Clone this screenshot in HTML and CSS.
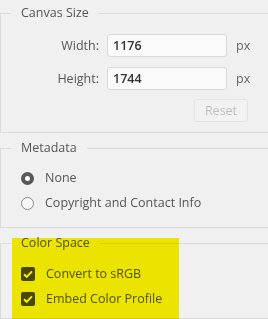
FILE: index.html
```html
<!DOCTYPE html>
<html lang="en">
<head>
  <meta charset="UTF-8">
  <meta name="viewport" content="width=device-width, initial-scale=1.0">
  <title>Export settings</title>
  <link rel="stylesheet" href="styles.css">
</head>
<body>

  <form class="panel">

    <fieldset class="group canvas-size">
      <legend>Canvas Size</legend>
      <div class="size-grid">
        <label for="w">Width:</label>
        <input id="w" type="text" value="1176">
        <span class="unit">px</span>
        <label for="h">Height:</label>
        <input id="h" type="text" value="1744">
        <span class="unit">px</span>
      </div>
      <div class="reset-row">
        <button type="button" class="reset" disabled>Reset</button>
      </div>
    </fieldset>

    <fieldset class="group metadata">
      <legend>Metadata</legend>
      <div class="options">
        <label class="option"><span class="radio checked"></span>None</label>
        <label class="option"><span class="radio"></span>Copyright and Contact Info</label>
      </div>
    </fieldset>

    <fieldset class="group color-space">
      <legend>Color Space</legend>
      <div class="options">
        <label class="option">
          <span class="check"><svg width="14" height="14" viewBox="0 0 14 14"><path d="M3 7.2l2.7 2.7L11 4.4" fill="none" stroke="#fff" stroke-width="2"/></svg></span>
          Convert to sRGB
        </label>
        <label class="option">
          <span class="check"><svg width="14" height="14" viewBox="0 0 14 14"><path d="M3 7.2l2.7 2.7L11 4.4" fill="none" stroke="#fff" stroke-width="2"/></svg></span>
          Embed Color Profile
        </label>
      </div>
      <!-- highlight marker laid over the section -->
      <div class="highlight"></div>
    </fieldset>

  </form>

</body>
</html>
```

FILE: styles.css
```css
body{
  margin: 0; padding: 0;
  background-color: #f0f0f0;
  color: #555;
  font-family: 'Open Sans', sans-serif;
  font-size: 12.5px;
  line-height: 18px;
  height: 319px;
  overflow: hidden;
}

fieldset.group{
  position: relative;
  margin: 4px 0 0 0;
  padding: 11px 0 10px 10px;
  border: 1px solid #dadada;
  border-right: none;
}

fieldset.canvas-size{
  padding-top: 12px;
}

fieldset.group legend{
  padding: 0 10px;
  line-height: 18px;
  color: #555;
}

fieldset.metadata, fieldset.color-space{
  margin-top: 6px;
}

.size-grid{
  display: grid;
  grid-template-columns: 88px 120px auto;
  column-gap: 8px;
  row-gap: 10px;
  align-items: center;
}

.size-grid label{
  text-align: right;
}

.size-grid input{
  box-sizing: border-box;
  height: 23px;
  width: 120px;
  margin: 0;
  padding: 0 5px;
  border: 1px solid #d9d9d9;
  border-radius: 3px;
  background: #fafafa;
  font-family: 'Open Sans', sans-serif;
  font-size: 12.5px;
  font-weight: 600;
  color: #333;
}

.size-grid .unit{
  padding-left: 1px;
  color: #666;
}

.reset-row{
  display: flex;
  justify-content: flex-end;
  padding: 9px 20px 0 0;
  width: 237px;
}

button.reset{
  height: 23px;
  width: 54px;
  padding: 0;
  border: 1px solid #e2e2e2;
  border-radius: 3px;
  background: #f2f2f2;
  font-family: 'Open Sans', sans-serif;
  font-size: 12.5px;
  color: #bdbdbd;
}

.options{
  display: flex;
  flex-direction: column;
  gap: 7px;
  padding: 1px 0 5px 10px;
}

.option{
  display: flex;
  align-items: center;
  gap: 11px;
  height: 18px;
}

.radio{
  box-sizing: border-box;
  width: 13px; height: 13px;
  border-radius: 50%;
  border: 1px solid #8a8a8a;
  background: #f7f7f7;
}

.radio.checked{
  border: 4px solid #585858;
  background: #fff;
}

.check{
  width: 14px; height: 14px;
  border-radius: 2px;
  background: #4a4a4a;
  display: flex;
}

.color-space .options{
  padding-top: 2px;
  padding-bottom: 0;
}

.highlight{
  position: absolute;
  left: 11px; top: -14px;
  width: 167px; height: 81px;
  background: rgb(250, 242, 0);
  mix-blend-mode: multiply;
}
```
